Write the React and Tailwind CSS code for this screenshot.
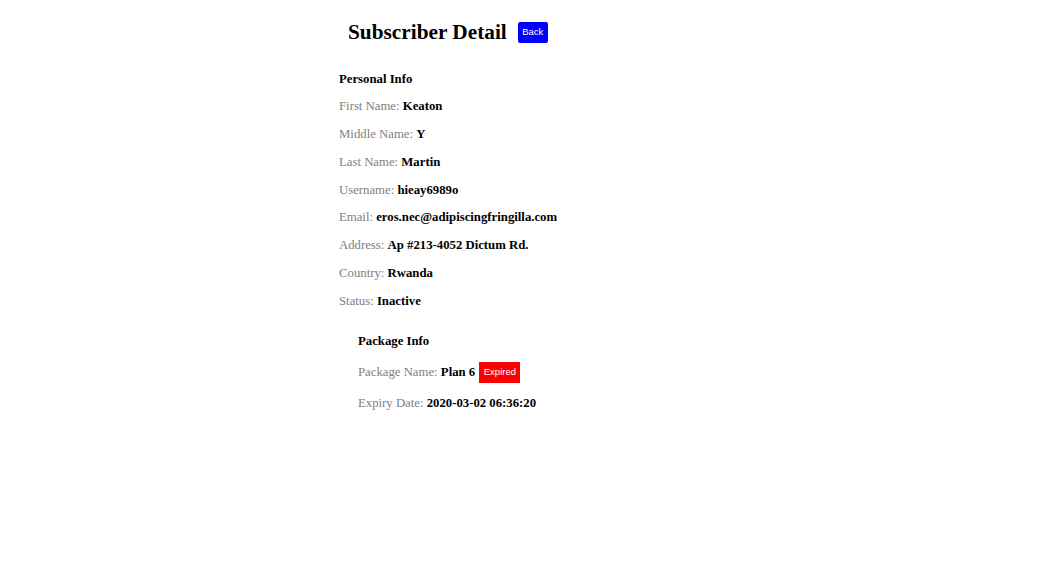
import React from "react";

const serif = { fontFamily: '"Liberation Serif", "Times New Roman", serif' };

function Row({ label, value }) {
  return (
    <div className="h-[27.86px] flex items-center text-[12.75px] leading-[16px] whitespace-pre">
      <span className="text-[#808080]">{label}: </span>
      <span className="font-bold text-black">{value}</span>
    </div>
  );
}

export default function App() {
  return (
    <div className="min-h-[571px] bg-white" style={serif}>
      <div className="w-[386px] mx-auto pt-[20px]">
        <div className="flex items-center pl-[9px] gap-[11px] h-[24px]">
          <h1 className="text-[21.3px] leading-[24px] font-bold text-black">Subscriber Detail</h1>
          <button
            className="h-[21px] w-[30px] bg-[#0000ff] text-white text-[9.5px] rounded-[2px] flex items-center justify-center"
            style={{ fontFamily: '"Liberation Sans", Arial, sans-serif' }}
          >
            Back
          </button>
        </div>
        <div className="mt-[27px] text-[12.75px] leading-[16px] font-bold text-black">Personal Info</div>
        <div className="mt-[5px]">
          <Row label="First Name" value="Keaton" />
          <Row label="Middle Name" value="Y" />
          <Row label="Last Name" value="Martin" />
          <Row label="Username" value="hieay6989o" />
          <Row label="Email" value="eros.nec@adipiscingfringilla.com" />
          <Row label="Address" value="Ap #213-4052 Dictum Rd." />
          <Row label="Country" value="Rwanda" />
          <Row label="Status" value="Inactive" />
        </div>
        <div className="pl-[19px] mt-[18px]">
          <div className="text-[12.75px] leading-[16px] font-bold text-black">Package Info</div>
          <div className="mt-[8px]">
            <div className="h-[31px] flex items-center text-[12.75px] leading-[16px] whitespace-pre">
              <span className="text-[#808080]">Package Name: </span>
              <span className="font-bold text-black">Plan 6 </span>
              <span
                className="ml-[1px] h-[21px] w-[41px] bg-[#ff0000] text-white text-[9.5px] flex items-center justify-center"
                style={{ fontFamily: '"Liberation Sans", Arial, sans-serif' }}
              >
                Expired
              </span>
            </div>
            <div className="h-[31px] flex items-center text-[12.75px] leading-[16px] whitespace-pre">
              <span className="text-[#808080]">Expiry Date: </span>
              <span className="font-bold text-black">2020-03-02 06:36:20</span>
            </div>
          </div>
        </div>
      </div>
    </div>
  );
}
